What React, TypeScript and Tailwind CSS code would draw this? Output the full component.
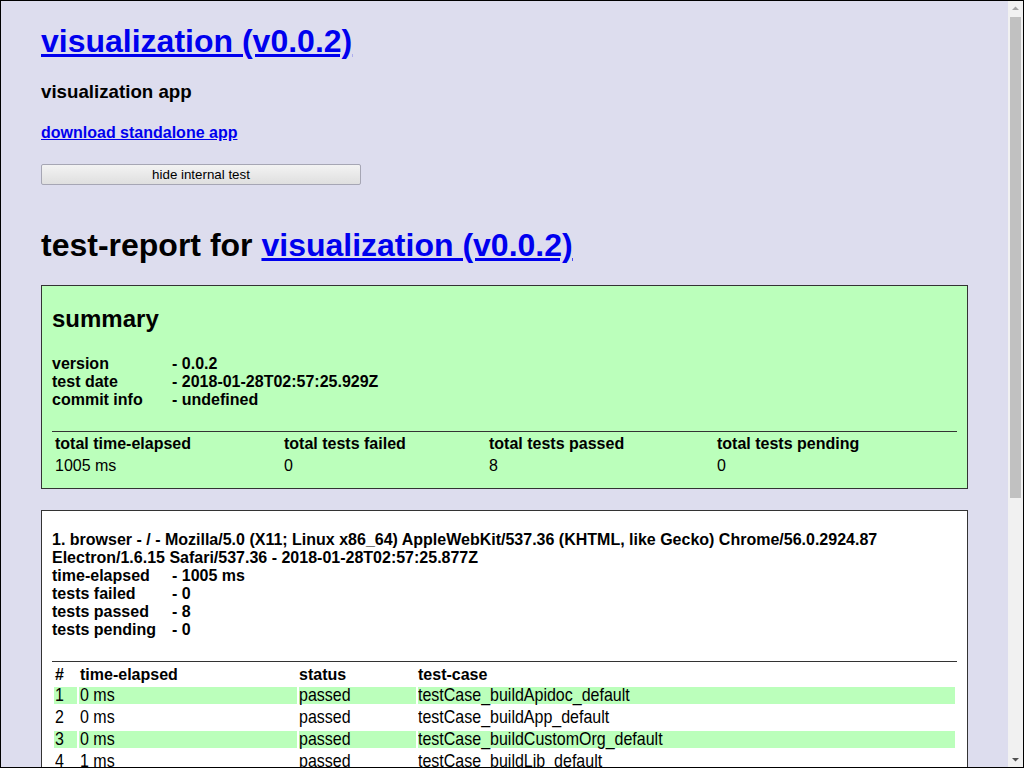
const tests = [
  { elapsed: "0 ms", status: "passed", name: "testCase_buildApidoc_default" },
  { elapsed: "0 ms", status: "passed", name: "testCase_buildApp_default" },
  { elapsed: "0 ms", status: "passed", name: "testCase_buildCustomOrg_default" },
  { elapsed: "1 ms", status: "passed", name: "testCase_buildLib_default" },
  { elapsed: "0 ms", status: "passed", name: "testCase_buildReadme_default" },
  { elapsed: "1 ms", status: "passed", name: "testCase_buildTest_default" },
  { elapsed: "0 ms", status: "passed", name: "testCase_webpage_default" },
  { elapsed: "1003 ms", status: "passed", name: "testCase_webpage_error" },
];

function KeyValue({ label, value }: { label: string; value: string }) {
  return (
    <div className="flex leading-[18px]">
      <span className="w-[120px] shrink-0">{label}</span>
      <span>- {value}</span>
    </div>
  );
}

// tall, narrow-looking cell text as in the reference
function Tall({ children }: { children: React.ReactNode }) {
  return <span className="inline-block origin-[50%_75%] scale-y-[1.2] whitespace-nowrap">{children}</span>;
}

function Scrollbar() {
  return (
    <div className="flex w-[15px] shrink-0 flex-col bg-[#f1f1f1]">
      <svg width="15" height="15" viewBox="0 0 15 15" className="shrink-0">
        <polygon points="4,9 11,9 7.5,5.5" fill="#a3a3a3" />
      </svg>
      <div className="flex-1 px-[2px]">
        <div className="mt-px h-[481px] bg-[#c1c1c1]" />
      </div>
      <svg width="15" height="15" viewBox="0 0 15 15" className="shrink-0">
        <polygon points="4,6 11,6 7.5,9.5" fill="#505050" />
      </svg>
    </div>
  );
}

export default function App() {
  return (
    <div className="flex h-screen overflow-hidden border border-black bg-[#ddddee] font-['Liberation_Sans',Arial,sans-serif] text-[16px] text-black">
      <div className="min-w-0 flex-1 overflow-hidden px-[40px]">
        <h1 className="pt-[22px] text-[32px] leading-[37px] font-bold">
          <a href="#" className="text-[#0000ee] underline">
            visualization (v0.0.2)
          </a>
        </h1>
        <h3 className="mt-[21px] text-[18.72px] leading-[22px] font-bold">visualization app</h3>
        <p className="mt-[21px] leading-[18px] font-bold">
          <a href="#" className="text-[#0000ee] underline">
            download standalone app
          </a>
        </p>
        <button className="mt-[22px] block h-[21px] w-[320px] rounded-[2px] border border-[#a6a6b4] bg-gradient-to-b from-[#f3f3f3] to-[#dfdfdf] text-[13.33px] leading-[17px] text-black">
          hide internal test
        </button>

        <h1 className="mt-[42px] text-[32px] leading-[37px] font-bold">
          test-report for{" "}
          <a href="#" className="text-[#0000ee] underline">
            visualization (v0.0.2)
          </a>
        </h1>

        {/* summary */}
        <div className="mt-[21px] border border-[#333] bg-[#bbffbb] px-[10px] pb-[10px]">
          <h2 className="pt-[19px] text-[24px] leading-[28px] font-bold">summary</h2>
          <div className="mt-[22px] font-bold">
            <KeyValue label="version" value="0.0.2" />
            <KeyValue label="test date" value="2018-01-28T02:57:25.929Z" />
            <KeyValue label="commit info" value="undefined" />
          </div>
          <table className="mt-[22px] w-full table-fixed border-separate border-spacing-[2px] border-t border-[#333]">
            <thead>
              <tr>
                <th className="w-[227px] p-[1px] text-left leading-[18px] font-bold">total time-elapsed</th>
                <th className="w-[203px] p-[1px] text-left leading-[18px] font-bold">total tests failed</th>
                <th className="w-[226px] p-[1px] text-left leading-[18px] font-bold">total tests passed</th>
                <th className="p-[1px] text-left leading-[18px] font-bold">total tests pending</th>
              </tr>
            </thead>
            <tbody>
              <tr>
                <td className="p-[1px] leading-[18px]">1005 ms</td>
                <td className="p-[1px] leading-[18px]">0</td>
                <td className="p-[1px] leading-[18px]">8</td>
                <td className="p-[1px] leading-[18px]">0</td>
              </tr>
            </tbody>
          </table>
        </div>

        {/* platform */}
        <div className="mt-[21px] border border-[#333] bg-white px-[10px] pt-[20px] pb-[10px]">
          <div className="font-bold">
            <div className="leading-[18px]">
              1. browser - / - Mozilla/5.0 (X11; Linux x86_64) AppleWebKit/537.36 (KHTML, like Gecko)
              Chrome/56.0.2924.87 Electron/1.6.15 Safari/537.36 - 2018-01-28T02:57:25.877Z
            </div>
            <KeyValue label="time-elapsed" value="1005 ms" />
            <KeyValue label="tests failed" value="0" />
            <KeyValue label="tests passed" value="8" />
            <KeyValue label="tests pending" value="0" />
          </div>
          <table className="mt-[22px] w-full table-fixed border-separate border-spacing-x-[2px] border-spacing-y-[5px] border-t border-[#333]">
            <thead>
              <tr>
                <th className="w-[23px] px-[1px] py-0 text-left leading-[15px] font-bold">#</th>
                <th className="w-[218px] px-[1px] py-0 text-left leading-[15px] font-bold">time-elapsed</th>
                <th className="w-[117px] px-0 py-0 text-left leading-[15px] font-bold">status</th>
                <th className="px-0 py-0 text-left leading-[15px] font-bold">test-case</th>
              </tr>
            </thead>
            <tbody>
              {tests.map((t, i) => {
                const bg = i % 2 === 0 ? "bg-[#bbffbb]" : "";
                return (
                  <tr key={t.name}>
                    <td className={`${bg} h-[17px] px-[1px] py-0 leading-[17px]`}>
                      <Tall>{i + 1}</Tall>
                    </td>
                    <td className={`${bg} h-[17px] px-[1px] py-0 leading-[17px]`}>
                      <Tall>{t.elapsed}</Tall>
                    </td>
                    <td className={`${bg} h-[17px] px-0 py-0 leading-[17px]`}>
                      <Tall>{t.status}</Tall>
                    </td>
                    <td className={`${bg} h-[17px] px-0 py-0 leading-[17px]`}>
                      <Tall>{t.name}</Tall>
                    </td>
                  </tr>
                );
              })}
            </tbody>
          </table>
        </div>
      </div>
      <Scrollbar />
    </div>
  );
}
